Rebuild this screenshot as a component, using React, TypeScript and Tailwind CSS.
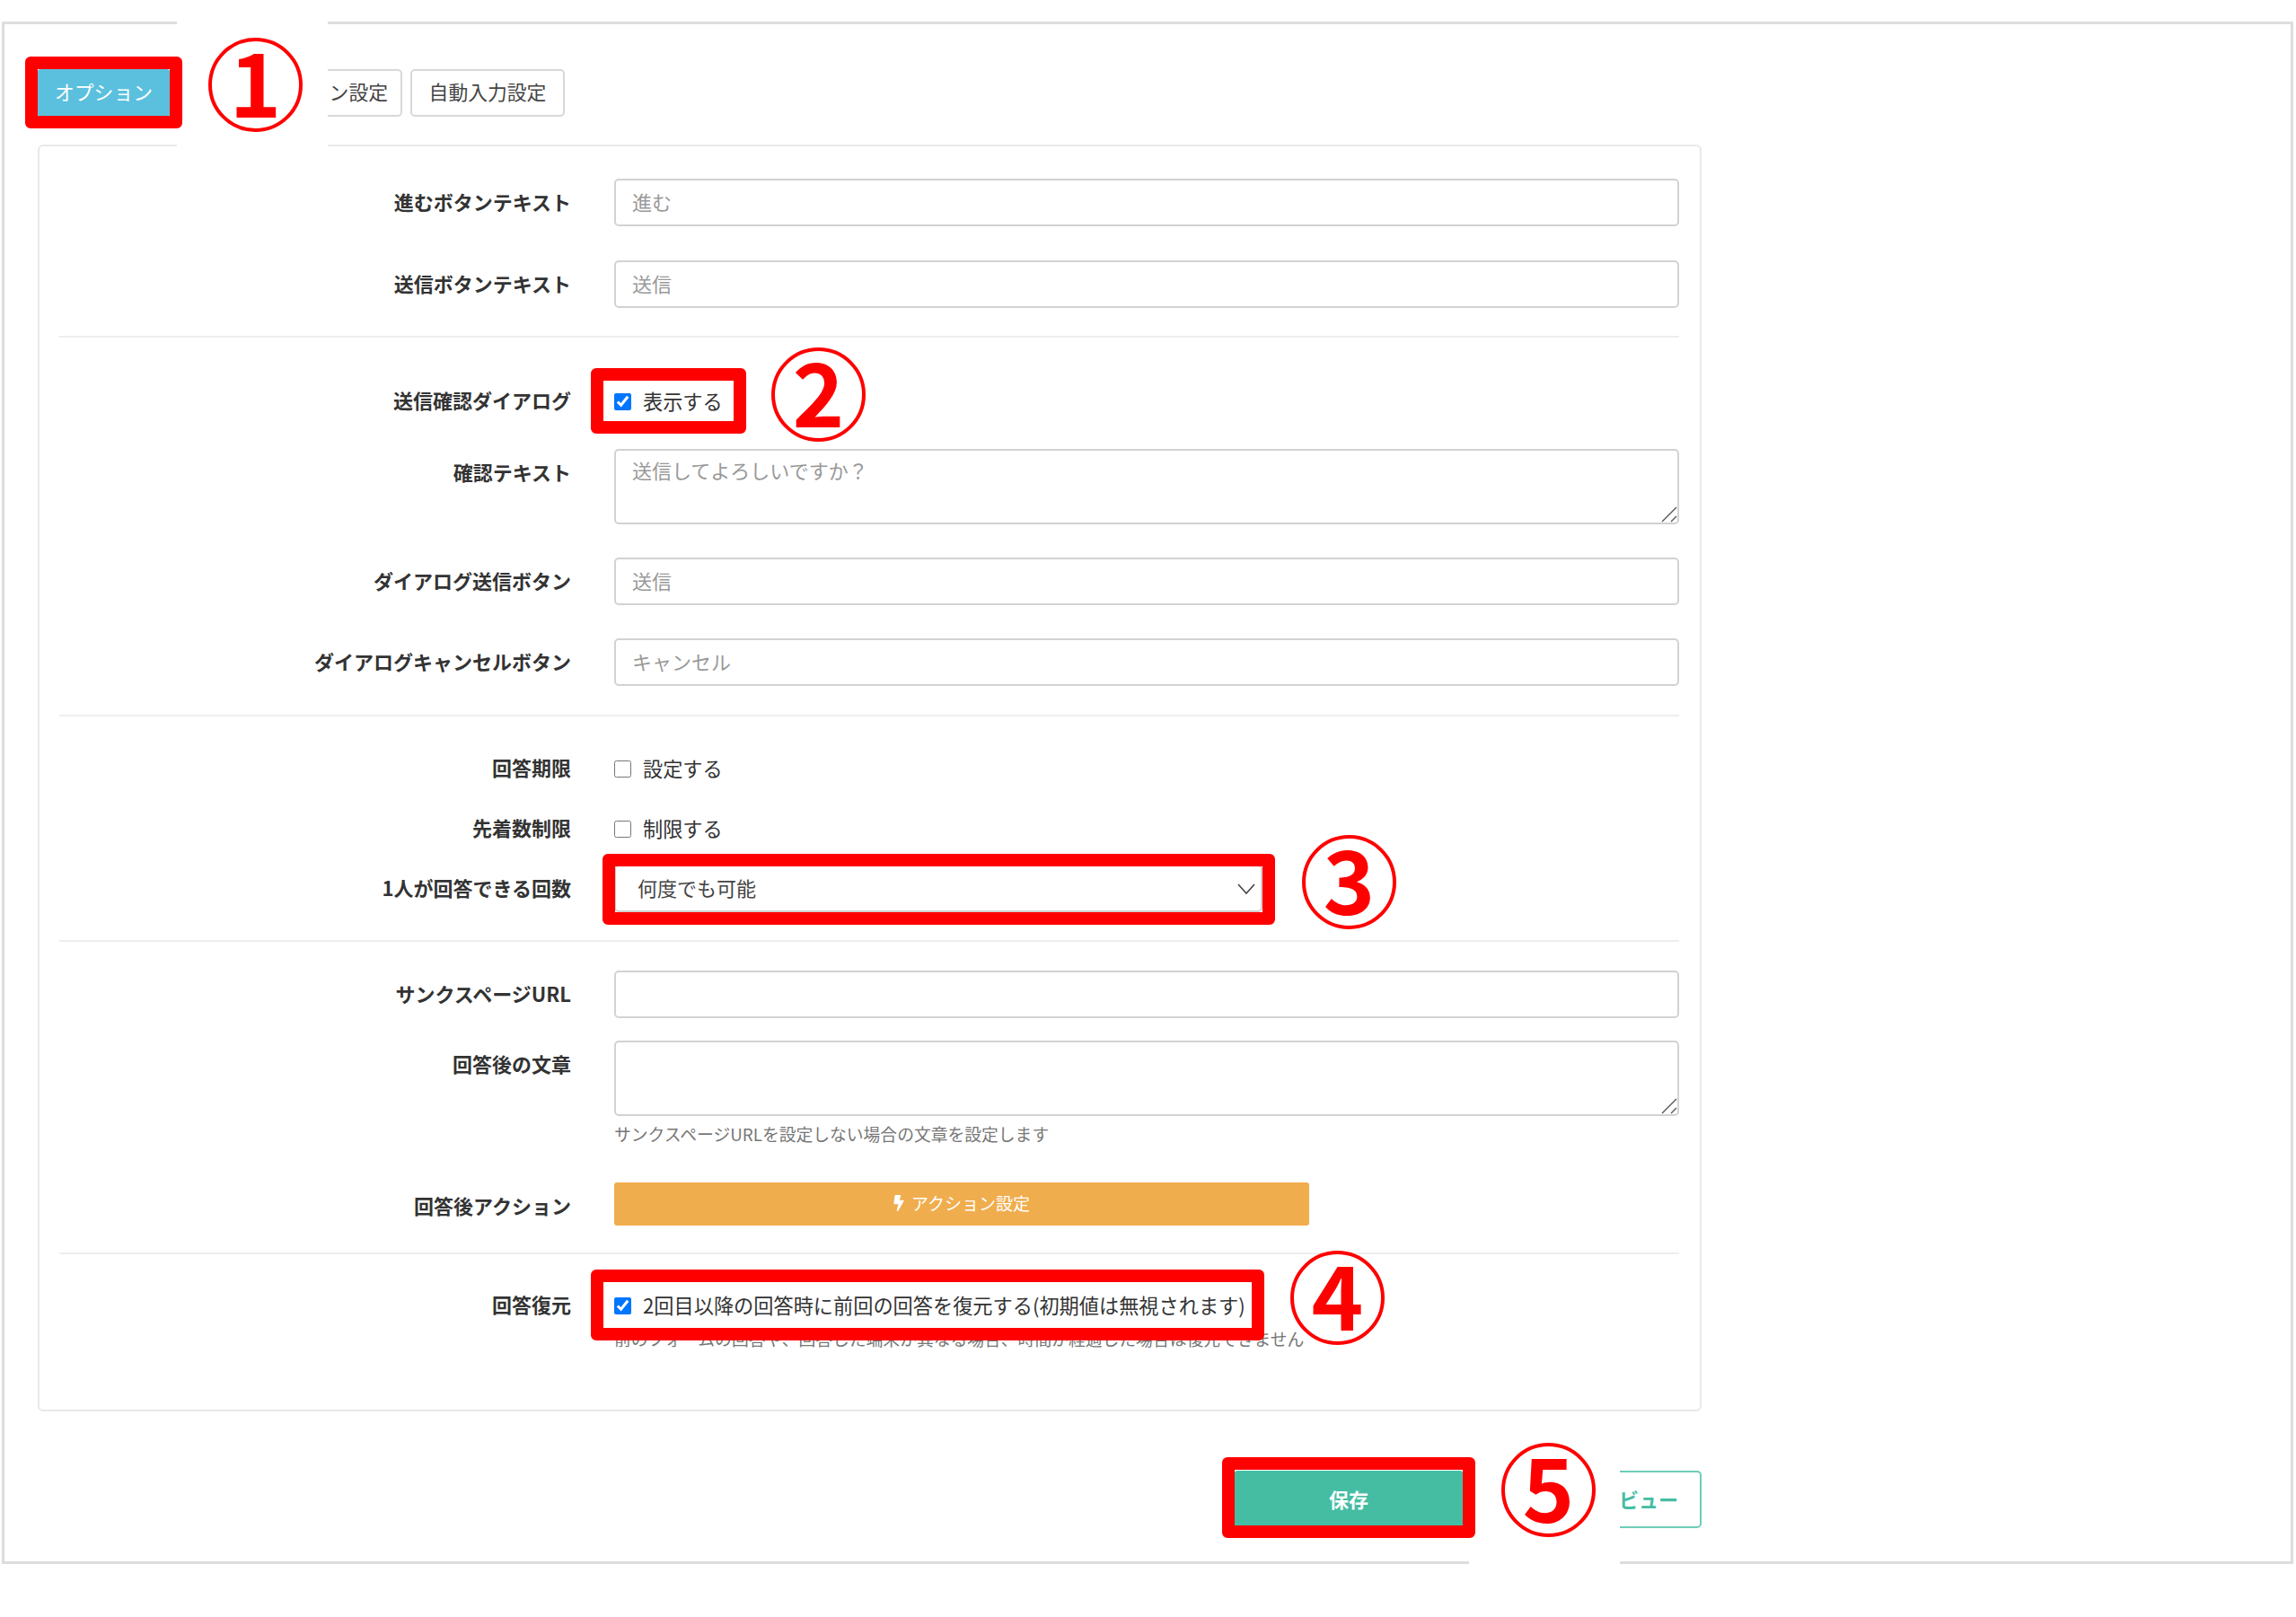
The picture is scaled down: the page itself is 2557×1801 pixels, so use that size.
import type { ReactNode } from 'react';
import { FaBolt } from 'react-icons/fa';

// right edge of the label column sits 48px before the field column
function Row({ label, children, className }: { label: string; children: ReactNode; className?: string }) {
  return (
    <div className={`flex items-start gap-[48px] ${className ?? ''}`}>
      <div className="w-[570px] shrink-0 text-right text-[22px] leading-[51px] font-bold text-[#333]">{label}</div>
      <div className="w-[1186px]">{children}</div>
    </div>
  );
}

function TextInput({ placeholder }: { placeholder?: string }) {
  return (
    <input
      readOnly
      placeholder={placeholder}
      className="block h-[53px] w-full rounded-[5px] border-2 border-[#d2d2d2] bg-white px-[18px] pb-[3px] text-[22px] text-[#333] outline-none placeholder:text-[#999]"
    />
  );
}

function TextArea({ placeholder }: { placeholder?: string }) {
  return (
    <div className="relative">
      <textarea
        readOnly
        placeholder={placeholder}
        className="block h-[84px] w-full resize-none rounded-[5px] border-2 border-[#d2d2d2] bg-white px-[18px] py-[5px] text-[22px] leading-[33px] text-[#333] outline-none placeholder:text-[#999]"
      />
      {/* resize grip */}
      <svg viewBox="0 0 18 18" className="absolute right-[2px] bottom-[2px] h-[18px] w-[18px] text-[#555]" fill="none" stroke="currentColor" strokeWidth="1.4">
        <path d="M1 17L17 1M11 17l6-6" />
      </svg>
    </div>
  );
}

function Check({ label, checked }: { label: string; checked?: boolean }) {
  return (
    <label className="flex h-[53px] items-center gap-[13px] text-[22.2px] text-[#333]">
      <input type="checkbox" readOnly checked={!!checked} className="mt-[1px] h-[19px] w-[19px] accent-[#0075ff]" />
      {label}
    </label>
  );
}

function Help({ children }: { children: ReactNode }) {
  return <p className="text-[18.8px] leading-[24px] text-[#777]">{children}</p>;
}

function Divider({ className }: { className: string }) {
  return <hr className={`ml-[22px] w-[1804px] border-0 border-t-2 border-[#eeeeee] ${className}`} />;
}

function Tab({ children, active, className }: { children: ReactNode; active?: boolean; className?: string }) {
  return (
    <button
      className={
        active
          ? 'h-[53px] w-[147px] rounded-[3px] bg-[#5bc0de] pb-[2px] text-[21.8px] text-white'
          : `h-[53px] rounded-[5px] border-2 border-[#d8d8d8] bg-white pb-[2px] text-[21.8px] text-[#444] ${className ?? ''}`
      }
    >
      {children}
    </button>
  );
}

function Digit({ children }: { children: ReactNode }) {
  return <span className="mb-[13px] text-[98px] leading-none font-bold text-[#ff0000]">{children}</span>;
}

const circle = 'absolute flex h-[105px] w-[105px] items-center justify-center rounded-full border-4 border-[#ff0000] bg-white';
const marker = 'absolute rounded-[6px] border-[14px] border-[#ff0000]';

export default function App() {
  return (
    <div className="relative h-[1801px] w-[2557px] overflow-hidden bg-white pt-[24px] font-['Noto_Sans_CJK_JP','Noto_Sans',sans-serif]">
      <div className="ml-[2px] h-[1718px] w-[2552px] border-[3px] border-[#dddddd] pt-[50px] pl-[37px]">
        <div className="flex gap-[9px]">
          <Tab active>オプション</Tab>
          <Tab className="w-[250px]">ヘッダーデザイン設定</Tab>
          <Tab className="w-[172px]">自動入力設定</Tab>
        </div>

        <div className="mt-[31px] h-[1411px] w-[1853px] rounded-[6px] border-2 border-[#e8e8e8] pt-[36px]">
          <div className="ml-[22px]">
            <Row label="進むボタンテキスト">
              <TextInput placeholder="進む" />
            </Row>
            <Row label="送信ボタンテキスト" className="mt-[38px]">
              <TextInput placeholder="送信" />
            </Row>
          </div>
          <Divider className="mt-[31px]" />
          <div className="ml-[22px]">
            <Row label="送信確認ダイアログ" className="mt-[44px]">
              <Check label="表示する" checked />
            </Row>
            <Row label="確認テキスト" className="mt-[27px]">
              <TextArea placeholder="送信してよろしいですか？" />
            </Row>
            <Row label="ダイアログ送信ボタン" className="mt-[37px]">
              <TextInput placeholder="送信" />
            </Row>
            <Row label="ダイアログキャンセルボタン" className="mt-[37px]">
              <TextInput placeholder="キャンセル" />
            </Row>
          </div>
          <Divider className="mt-[32px]" />
          <div className="ml-[22px]">
            <Row label="回答期限" className="mt-[31px]">
              <Check label="設定する" />
            </Row>
            <Row label="先着数制限" className="mt-[14px]">
              <Check label="制限する" />
            </Row>
            <Row label="1人が回答できる回数" className="mt-[14px]">
              <div className="relative w-[722px]">
                <select className="block h-[53px] w-full appearance-none rounded-[5px] border-2 border-[#d2d2d2] bg-white pb-[2px] pl-[24px] text-[22px] text-[#444] outline-none">
                  <option>何度でも可能</option>
                </select>
                <svg viewBox="0 0 20 12" className="absolute top-[21px] right-[8px] h-[12px] w-[20px] text-[#444]" fill="none" stroke="currentColor" strokeWidth="1.6">
                  <path d="M1 1l9 10 9-10" />
                </svg>
              </div>
            </Row>
          </div>
          <Divider className="mt-[31px]" />
          <div className="ml-[22px]">
            <Row label="サンクスページURL" className="mt-[32px]">
              <TextInput />
            </Row>
            <Row label="回答後の文章" className="mt-[25px]">
              <TextArea />
              <div className="mt-[8px]">
                <Help>サンクスページURLを設定しない場合の文章を設定します</Help>
              </div>
            </Row>
            <Row label="回答後アクション" className="mt-[42px]">
              <button className="flex h-[48px] w-[774px] items-center justify-center gap-[8px] rounded-[3px] bg-[#f0ad4e] pb-[2px] text-[19px] text-white">
                <FaBolt className="h-[18px] w-[12px]" />
                アクション設定
              </button>
            </Row>
          </div>
          <Divider className="mt-[27px]" />
          <div className="ml-[22px]">
            <Row label="回答復元" className="mt-[30px]">
              <Check label="2回目以降の回答時に前回の回答を復元する(初期値は無視されます)" checked />
              <div className="-mt-[1px]">
                <Help>前のフォームの回答や、回答した端末が異なる場合、時間が経過した場合は復元できません</Help>
              </div>
            </Row>
          </div>
        </div>

        <div className="mt-[66px] flex w-[1853px] justify-end gap-[106px]">
          <button className="h-[64px] w-[254px] rounded-[3px] bg-[#45bda3] pb-[2px] text-[22px] font-bold text-white">保存</button>
          <button className="h-[64px] w-[160px] rounded-[5px] border-2 border-[#6ccdb8] bg-white pr-[2px] pb-[2px] text-[22px] font-bold text-[#45bda3]">プレビュー</button>
        </div>
      </div>

      {/* white patches that hide the page behind the callout numbers */}
      <div className="absolute top-[20px] left-[197px] h-[145px] w-[168px] bg-white" />
      <div className="absolute top-[1600px] left-[1636px] h-[145px] w-[168px] bg-white" />

      {/* red callouts */}
      <div className={`${marker} top-[63px] left-[28px] h-[80px] w-[175px]`} />
      <div className={`${marker} top-[410px] left-[658px] h-[73px] w-[173px]`} />
      <div className={`${marker} top-[951px] left-[671px] h-[79px] w-[749px]`} />
      <div className={`${marker} top-[1414px] left-[658px] h-[79px] w-[750px]`} />
      <div className={`${marker} top-[1623px] left-[1361px] h-[90px] w-[282px]`} />

      <div className={`${circle} top-[42px] left-[232px]`}><Digit>1</Digit></div>
      <div className={`${circle} top-[387px] left-[859px]`}><Digit>2</Digit></div>
      <div className={`${circle} top-[930px] left-[1450px]`}><Digit>3</Digit></div>
      <div className={`${circle} top-[1393px] left-[1437px]`}><Digit>4</Digit></div>
      <div className={`${circle} top-[1607px] left-[1672px]`}><Digit>5</Digit></div>
    </div>
  );
}
